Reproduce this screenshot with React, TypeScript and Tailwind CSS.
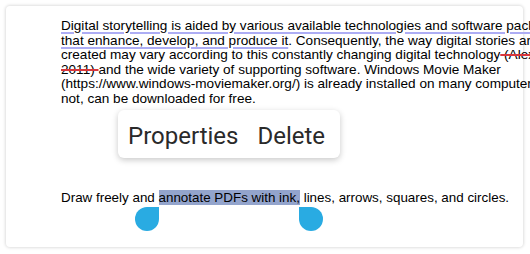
import React from "react";

export default function App() {
  const arial = { fontFamily: '"Liberation Sans", Arial, sans-serif' };
  return (
    <div className="relative w-[530px] h-[254px] overflow-hidden bg-white">
      <div className="absolute left-0 top-0 w-full h-full p-[6px] pr-[7px] pb-[7px]">
        <div
          className="relative w-full h-full rounded-[4px] bg-white shadow-[0_0_3px_1px_rgba(0,0,0,0.13)] pt-[13px] pl-[55px] flex flex-col leading-[14.5px] text-black whitespace-nowrap"
          style={arial}
        >
          <p className="text-[13.58px]">
            <span className="underline decoration-[#adadf4] decoration-[1.5px] underline-offset-[2px]">
              Digital storytelling is aided by various available technologies and software packages
            </span>
            <br />
            <span className="underline decoration-[#adadf4] decoration-[1.5px] underline-offset-[2px]">
              that enhance, develop, and produce it
            </span>
            . Consequently, the way digital stories are
            <br />
            created may vary according to this constantly changing digital technology
            <span className="line-through decoration-[#d8363c] decoration-[1.5px]"> (Alexander,</span>
            <br />
            <span className="line-through decoration-[#d8363c] decoration-[1.5px]">2011) </span>
            and the wide variety of supporting software. Windows Movie Maker
            <br />
            (https://www.windows-moviemaker.org/) is already installed on many computers and, if
            <br />
            not, can be downloaded for free.
          </p>
          <p className="mt-[85px] text-[13.4px]">
            Draw freely and{" "}
            <span className="bg-[#93a4cc]">annotate PDFs with ink,</span> lines, arrows, squares, and circles.
          </p>
        </div>
      </div>

      {/* selection handles */}
      <div className="absolute left-[135px] top-[207px] w-[24px] h-[24px] bg-[#29abe2] rounded-full rounded-tr-none" />
      <div className="absolute left-[299px] top-[207px] w-[24px] h-[24px] bg-[#29abe2] rounded-full rounded-tl-none" />

      {/* context menu */}
      <div
        className="absolute left-[118px] top-[110px] w-[222px] h-[48px] rounded-[6px] bg-white shadow-[0_2px_6px_rgba(0,0,0,0.22)] flex items-center pl-[10px] pt-[3px] text-[24px] text-[#2a2a2a] whitespace-nowrap"
        style={{ fontFamily: 'Roboto, "Noto Sans", sans-serif' }}
      >
        <span>Properties</span>
        <span className="ml-[19px]">Delete</span>
      </div>
    </div>
  );
}
